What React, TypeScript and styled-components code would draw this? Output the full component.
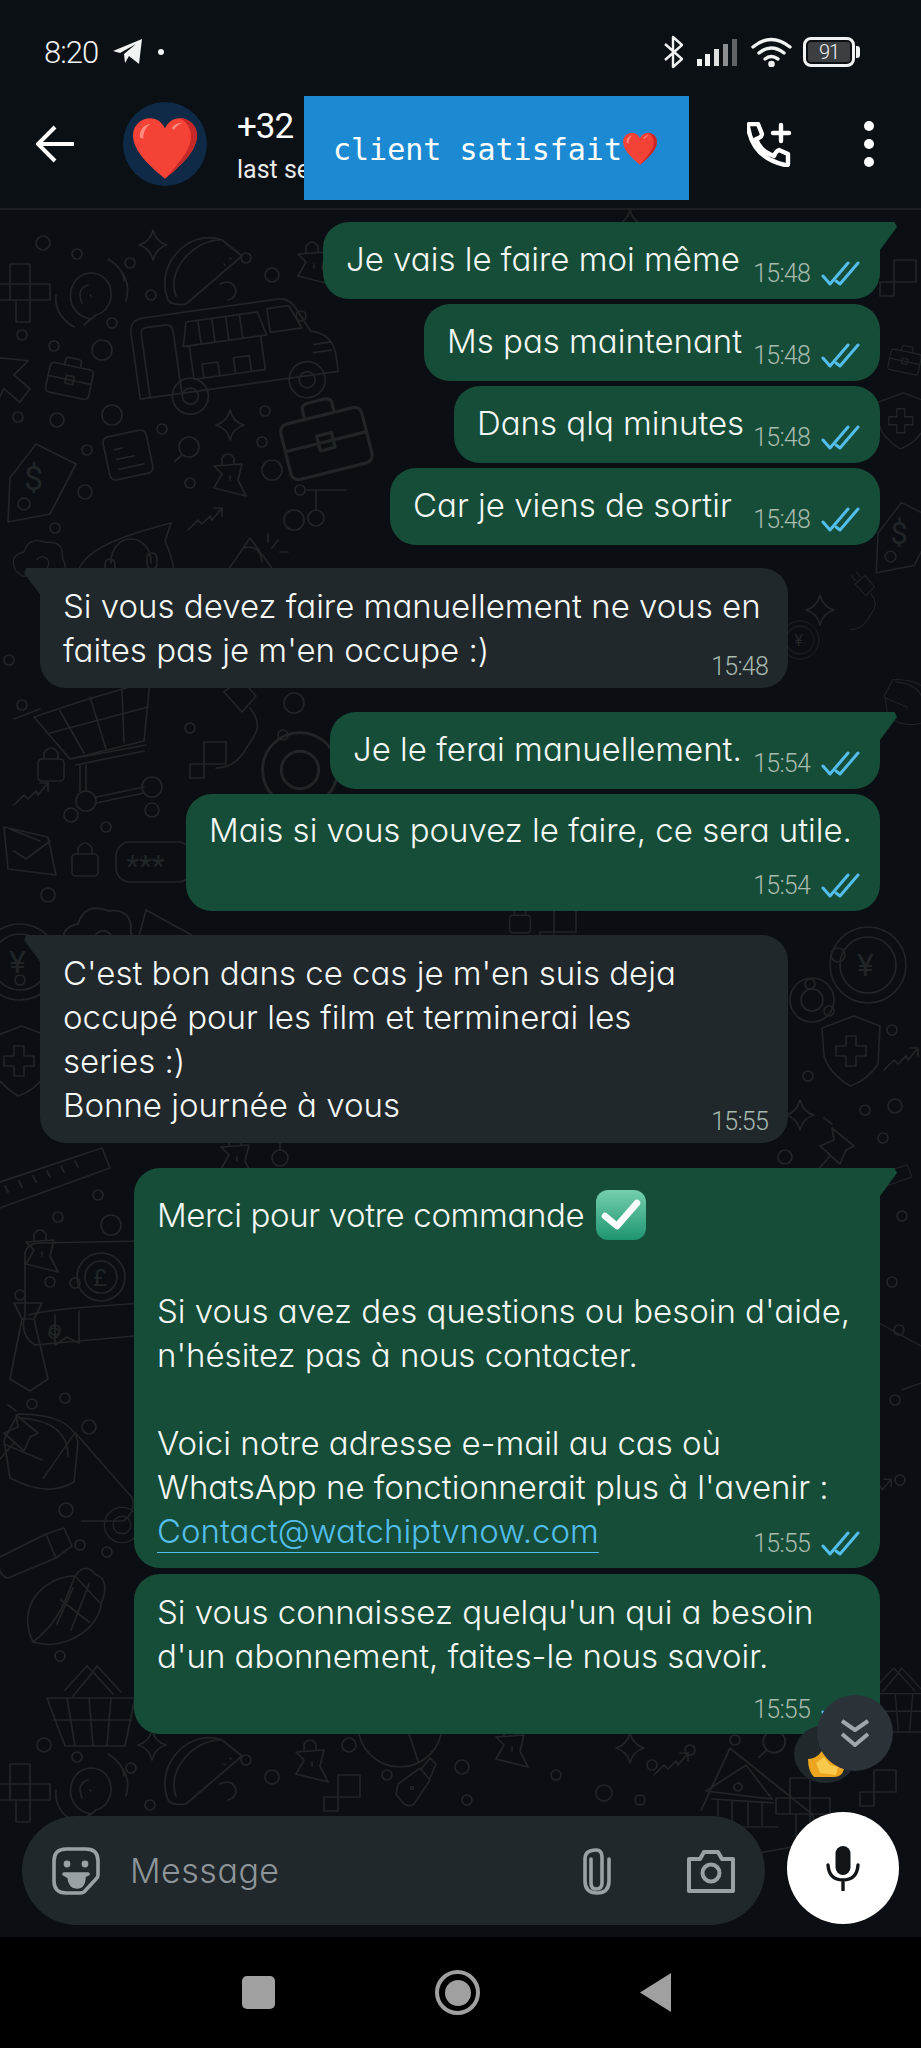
import React from "react";
import styled, { createGlobalStyle } from "styled-components";

const GlobalStyle = createGlobalStyle`
    * { box-sizing: border-box; }
    html, body { margin: 0; padding: 0; background: #0b0f13; }
`

const textFont = `"Inter", "Noto Sans", sans-serif`
const thinFont = `"Roboto", "Liberation Sans", sans-serif`
const doodleInk = "#202528"

// --- wallpaper doodles, every one drawn around 0,0 ---
const doodles: Record<string, React.ReactNode> = {
    truck: <>
        <path d="M0 22 Q0 8 14 8 H150 Q160 8 166 18 L178 44 Q200 50 200 72 V88 H0 Z"/>
        <path d="M10 88 V24 Q10 18 16 18 H34 Q42 18 42 26 V88"/>
        <path d="M56 18 H128 L134 42 H50 Z M68 18 V42 M82 18 V42 M96 18 V42 M110 18 V42"/>
        <path d="M56 42 V76 H128 V42 M66 76 V62 H82 V76 M98 76 V60 H114 V76"/>
        <path d="M138 16 H160 L170 40 H138 Z M180 58 H196 M178 66 H196"/>
        <circle cx="50" cy="92" r="18"/><circle cx="50" cy="92" r="8"/>
        <circle cx="168" cy="92" r="18"/><circle cx="168" cy="92" r="8"/>
    </>,
    taco: <>
        <path d="M-32 30 C-46 -4 -12 -42 22 -30 L42 -14 L-14 34 Q-28 36 -32 30 Z"/>
        <path d="M-24 26 C-34 0 -6 -30 20 -30 M24 -6 l1 1 M30 -12 l1 1 M20 14 q12 -6 16 6 q0 8 -8 10"/>
    </>,
    star: <path d="M0 -15 Q3 -3 14 0 Q3 3 0 15 Q-3 3 -14 0 Q-3 -3 0 -15 Z"/>,
    puzzle: <path d="M-20 -22 H0 V-2 H20 V14 H0 V36 H-14 V14 H-34 V-2 H-20 Z M-20 -2 H0 V14 H-20 Z"/>,
    sound: <>
        <path d="M0 24 C-28 18 -24 -20 0 -22 C26 -22 28 14 6 20 L-6 30 Z"/>
        <path d="M-8 8 Q-14 -6 -2 -10 M0 0 l1 1 M26 -30 Q42 -14 36 6 M18 -36 Q34 -26 34 -14 M-34 0 Q-36 20 -16 32"/>
    </>,
    brief: <>
        <rect x="-22" y="-12" width="44" height="30" rx="4"/>
        <path d="M-8 -12 V-17 Q-8 -20 -4 -20 H4 Q8 -20 8 -17 V-12 M-22 2 H22"/>
        <rect x="-4" y="-2" width="8" height="8"/>
    </>,
    cursor: <path d="M-24 -24 L24 -12 L8 0 L22 16 L10 28 L-4 12 L-14 28 Z"/>,
    tag: <>
        <path d="M-30 -2 L-4 -36 L36 -16 L10 34 L-32 42 Z"/>
        <circle cx="-16" cy="24" r="6"/>
        <text x="-16" y="10" fontSize="34" fill={doodleInk} stroke="none" fontFamily="Roboto">$</text>
    </>,
    note: <>
        <rect x="-22" y="-22" width="44" height="44" rx="6"/>
        <path d="M-12 -8 H-4 M-12 2 H6 M-12 12 H14"/>
    </>,
    loupe: <><circle cx="2" cy="-3" r="10"/><path d="M-5 5 L-12 11"/></>,
    soap: <>
        <path d="M-14 -8 L14 -10 L10 6 L18 22 L-14 14 L-6 0 Z"/>
        <path d="M-6 -9 V-16 Q0 -24 6 -16 V-10 M2 2 V6"/>
    </>,
    phones: <>
        <path d="M-50 40 C-50 10 -20 -5 46 -22 L40 -4 C48 14 54 30 44 60"/>
        <path d="M-14 18 C-14 -14 26 -14 26 18"/>
        <rect x="-20" y="14" width="10" height="16" rx="5"/><rect x="22" y="8" width="10" height="16" rx="5"/>
    </>,
    horn: <path d="M-26 34 L4 -10 L36 34 Z M-2 0 Q14 -4 16 14 M22 -14 V-6 M32 -8 L26 0 M34 4 H42"/>,
    nodes: <>
        <circle cx="-16" cy="-20" r="5"/><circle cx="0" cy="8" r="8"/>
        <path d="M-11 -20 H30 M0 -20 V0"/>
    </>,
    cart: <>
        <path d="M-56 -8 L-8 -24 L60 -44 L54 16 L-20 34 Z"/>
        <path d="M-30 -14 L-6 28 M0 -28 L16 24 M32 -36 L34 18 M-40 8 L58 -18"/>
        <path d="M-76 -6 L-50 -16 M-20 34 L56 20 M-14 40 L54 26 M-10 40 V66 M-4 40 V66"/>
        <circle cx="-4" cy="76" r="10"/><circle cx="62" cy="62" r="10"/>
        <path d="M6 72 L54 62 M6 78 L54 68"/>
    </>,
    basket: <>
        <path d="M-48 -8 L40 -8 L30 40 L-30 40 Z"/>
        <path d="M-28 -8 L-20 40 M-6 -8 L-2 40 M16 -8 L12 40 M-42 14 H36"/>
        <path d="M-30 -16 L-8 -40 L-2 -34 L-22 -10 M26 -14 L2 -40 L-2 -34 L18 -12"/>
    </>,
    plug: <path d="M-8 -10 L8 -24 L24 -6 L10 10 Z M-14 -24 l6 8 M-6 -30 l6 8 M18 6 C34 26 20 36 12 50 C4 62 -6 66 -16 66"/>,
    lock: <><rect x="-13" y="-6" width="26" height="22" rx="4"/><path d="M-7 -6 V-12 Q0 -22 7 -12 V-6"/></>,
    squares: <path d="M-6 -20 H16 V2 H-6 Z M-20 2 H-6 V16 H-20 Z"/>,
    trend: <path d="M-16 10 L-6 0 L-2 4 L6 -4 L8 0 L18 -12 M10 -12 H18 V-4"/>,
    letter: <path d="M-26 -18 L18 -8 L26 30 L-22 24 Z M-16 6 L-4 14 L20 -4 M-20 -16 L10 -4"/>,
    pill: <>
        <rect x="-34" y="-20" width="76" height="40" rx="14"/>
        <text x="-24" y="14" fontSize="30" fill={doodleInk} stroke="none" fontFamily="Roboto">***</text>
    </>,
    cloud: <path d="M-30 14 Q-40 -6 -20 -10 Q-14 -30 8 -22 Q30 -24 28 -2 Q38 16 20 20 H-22 Z M-4 0 a8 8 0 1 1 6 12"/>,
    coin: <>
        <circle r="38"/><circle r="28"/>
        <text x="-11" y="11" fontSize="32" fill={doodleInk} stroke="none" fontFamily="Roboto">¥</text>
    </>,
    shield: <>
        <path d="M-28 -22 L4 -34 L30 -24 L28 14 Q18 30 0 36 Q-22 22 -26 6 Z"/>
        <path d="M-4 -14 H6 V-4 H16 V6 H6 V16 H-4 V6 H-14 V-4 H-4 Z"/>
    </>,
    ruler: <path d="M-76 4 L62 -42 L70 -22 L-68 28 Z M-60 12 l-3 -6 M-46 7 l-3 -6 M-32 2 l-3 -6 M-18 -3 l-3 -6 M-4 -8 l-3 -6 M10 -13 l-3 -6 M24 -18 l-3 -6 M38 -23 l-3 -6"/>,
    wallet: <>
        <path d="M-60 -30 Q-60 -40 -48 -42 L60 -44 V50 L-50 60 Q-66 50 -60 30 Z M-56 30 Q-40 24 60 18"/>
        <circle cx="16" cy="-8" r="24"/><circle cx="16" cy="-8" r="16"/>
        <text x="8" y="1" fontSize="24" fill={doodleInk} stroke="none" fontFamily="Roboto">£</text>
        <path d="M-30 30 V60 L-18 52 L-6 58 V26"/>
    </>,
    tie: <path d="M-14 -42 H14 L6 -26 L20 34 L2 46 L-18 34 L-6 -26 Z M-6 -26 H6"/>,
    corn: <>
        <path d="M-32 30 C-50 -6 -20 -36 10 -36 C0 -10 -6 10 -32 30 Z"/>
        <path d="M-32 30 C0 40 34 16 36 -8 L10 -36"/>
        <path d="M10 -36 Q20 -50 30 -38 Q46 -32 36 -8 M-4 -12 L24 10 M8 -24 L-8 12 M24 -28 L6 18"/>
    </>,
    bottle: <path d="M-34 8 L14 -16 L24 8 L-24 28 Q-34 26 -34 8 Z M14 -16 L32 -22 L40 -4 L24 8"/>,
    dropper: <><path d="M-14 -2 L8 -18 L18 -6 L2 18 Q-4 22 -10 16 L-16 8 Z M10 -18 L18 -28 L24 -22 L18 -8"/><circle cx="0" cy="2" r="1.5"/></>,
    bank: <path d="M-36 -4 L4 -30 L30 4 Z M-30 4 L32 8 M-24 6 V30 M-10 6 V30 M6 8 V30 M20 8 V30 M-38 32 H36 M-4 -12 a4 4 0 1 0 .1 0"/>,
    mug: <path d="M-44 -40 L40 6 Q50 20 40 34 L-4 50 M-44 -40 L-60 20"/>,
    pin: <path d="M-6 -20 L16 -2 L8 2 L2 16 L-18 -2 L-4 -8 Z M-8 8 L-22 24 M-14 -30 l8 6"/>,
    bag: <path d="M-20 -34 Q34 -34 40 -6 L36 34 Q10 50 -28 30 L-34 -8 Z M-34 -4 L4 12 M-16 -30 Q30 -26 30 8"/>,
    ring: <><circle r="22"/><circle r="11"/></>,
    pie: <path d="M-42 -10 A42 42 0 0 0 42 -10 M6 -10 L18 26"/>,
}

type Placed = [string, number, number, number?, number?]

const placed: Placed[] = [
    ["truck", 128, 312, 1, -8], ["taco", 200, 270, 1, 0], ["star", 153, 245], ["star", 230, 425],
    ["puzzle", 30, 286, 1, 0], ["sound", 90, 295], ["brief", 70, 378, 1, 12], ["cursor", 6, 376, 1, -8],
    ["tag", 40, 480, 1, 0], ["note", 128, 455, 1, -12], ["loupe", 187, 450], ["soap", 228, 474],
    ["soap", 312, 262], ["brief", 325, 438, 1.9, -14], ["phones", 125, 545], ["horn", 246, 548], ["nodes", 316, 510],
    ["trend", 204, 520], ["cloud", 40, 560, .8, 0], ["cart", 90, 725], ["plug", 232, 702], ["lock", 51, 765],
    ["squares", 210, 762], ["trend", 30, 795], ["letter", 30, 845], ["lock", 85, 860], ["pill", 150, 862],
    ["cloud", 100, 935, 1.1, 0], ["ring", 300, 770, 1.7], ["mug", 190, 950], ["coin", 20, 962], ["shield", 18, 1060],
    ["ruler", 40, 1190], ["wallet", 85, 1285], ["tie", 28, 1345], ["soap", 40, 1250], ["coin", 868, 965],
    ["shield", 850, 1050], ["star", 800, 1115], ["pin", 838, 1148], ["trend", 900, 1060], ["ruler", 870, 1190, .6],
    ["bag", 38, 1448], ["pin", 22, 1435], ["mug", 100, 1480, .9, 20], ["bottle", 32, 1550], ["corn", 65, 1612],
    ["basket", 95, 1706], ["ring", 122, 1525, .8], ["taco", 200, 1770], ["soap", 310, 1760], ["star", 152, 1745],
    ["puzzle", 30, 1786], ["sound", 90, 1790], ["squares", 344, 1795], ["dropper", 412, 1786], ["pie", 400, 1735],
    ["star", 630, 1748], ["trend", 670, 1765], ["bank", 742, 1795], ["mug", 770, 1800, 1.1, 10], ["loupe", 772, 1745, 1.1],
    ["basket", 900, 1700, .8], ["squares", 880, 1790], ["puzzle", 810, 1800], ["soap", 510, 1745], ["star", 630, 225],
    ["bag", 905, 700, .6], ["shield", 900, 420, .8], ["brief", 905, 360, .7, 12], ["tag", 905, 535, .9], ["plug", 860, 590, .6],
    ["coin", 800, 640, .5], ["star", 820, 610], ["squares", 900, 280], ["ring", 812, 1000, 1], ["squares", 560, 930],
    ["nodes", 280, 1150], ["soap", 235, 1155], ["lock", 520, 920, .8], ["trend", 875, 1490, .9], ["mug", 905, 1350, .8],
]

const dots: [number, number, number][] = [
    [43, 243, 7], [77, 254, 5], [130, 263, 5], [151, 295, 5], [246, 258, 5], [272, 275, 7], [112, 323, 5], [301, 316, 5],
    [22, 335, 5], [54, 346, 5], [102, 350, 10], [57, 420, 7], [18, 417, 5], [112, 415, 10], [162, 429, 5], [265, 411, 5],
    [262, 442, 5], [272, 470, 10], [87, 450, 5], [85, 492, 7], [190, 483, 5], [55, 528, 5], [294, 520, 10], [9, 660, 5],
    [60, 645, 5], [22, 705, 5], [190, 728, 5], [283, 735, 5], [294, 703, 10], [71, 815, 7], [106, 827, 5], [152, 810, 7],
    [48, 895, 7], [20, 980, 5], [98, 1195, 5], [58, 1217, 5], [111, 1225, 10], [50, 1282, 5], [54, 1333, 5], [75, 1283, 5],
    [20, 1295, 5], [55, 1330, 5], [838, 955, 7], [810, 984, 5], [829, 1011, 5], [892, 1030, 5], [808, 1076, 5], [865, 1110, 5],
    [895, 1106, 7], [883, 1138, 5], [785, 1157, 7], [902, 1216, 5], [892, 1282, 5], [899, 1330, 5], [895, 1400, 5], [900, 1480, 5],
    [32, 1404, 5], [65, 1398, 5], [89, 1427, 7], [66, 1510, 7], [80, 1545, 5], [107, 1552, 5], [60, 1656, 5], [44, 1745, 7],
    [77, 1757, 5], [131, 1768, 5], [150, 1805, 5], [246, 1760, 5], [272, 1777, 7], [349, 1745, 7], [387, 1775, 5], [462, 1767, 7],
    [467, 1800, 5], [556, 1775, 5], [604, 1793, 8], [652, 1765, 5], [690, 1750, 5], [735, 1740, 5], [640, 1800, 5], [848, 1675, 5],
]

const Wallpaper = () => (
    <WallpaperSvg viewBox="0 210 921 1727" width="921" height="1727">
        {placed.map(([kind, x, y, scale = 1, rotate = 0], i) => (
            <g key={i} transform={`translate(${x} ${y}) rotate(${rotate}) scale(${scale})`}>{doodles[kind]}</g>
        ))}
        {dots.map(([x, y, r], i) => <circle key={i} cx={x} cy={y} r={r}/>)}
    </WallpaperSvg>
)

// --- small drawings ---
const Heart = ({size}: {size: number}) => (
    <svg width={size} height={size * .92} viewBox="0 0 100 92">
        <path d="M50 91 C22 68 3 48 3 27 C3 12 15 2 28 2 C38 2 46 8 50 17 C54 8 62 2 72 2 C85 2 97 12 97 27 C97 48 78 68 50 91Z" fill="#f44336"/>
        <path d="M72 2 C85 2 97 12 97 27 C97 48 78 68 50 91 C72 66 90 46 88 26 C87 14 80 6 72 2Z" fill="#c62828"/>
        <path d="M13 30 C12 18 20 11 29 10 C22 14 18 22 18 32Z" fill="#ff8a80"/>
        <path d="M60 16 C64 10 70 8 76 9 C70 11 66 14 63 19Z" fill="#ff8a80"/>
    </svg>
)

const Checks = () => (
    <svg width="39" height="25" viewBox="0 0 39 25" fill="none" stroke="#53bdeb" strokeWidth="3" strokeLinecap="round" strokeLinejoin="round">
        <path d="M2 15 L9 23 L27 2"/>
        <path d="M15 20 L19 23 L37 2"/>
    </svg>
)

const Telegram = () => (
    <svg width="30" height="26" viewBox="0 0 30 26">
        <path d="M0 12 L29 0 L26 25 L16 17 L12 24 L11 15 L23 5 L7 14 Z" fill="#f1f3f3"/>
    </svg>
)

const Bluetooth = () => (
    <svg width="21" height="34" viewBox="0 0 21 34" fill="none" stroke="#f1f3f3" strokeWidth="2.4" strokeLinejoin="round">
        <path d="M2 9 L19 24 L10 32 V2 L19 10 L2 25"/>
    </svg>
)

const Signal = () => (
    <svg width="41" height="27" viewBox="0 0 41 27">
        <rect x="0" y="20" width="5" height="7" fill="#f1f3f3"/>
        <rect x="8" y="15" width="5" height="12" fill="#f1f3f3"/>
        <rect x="17" y="10" width="5" height="17" fill="#e0e2e2"/>
        <rect x="26" y="5" width="5" height="22" fill="#8b8f91"/>
        <rect x="35" y="0" width="5" height="27" fill="#5f6366"/>
    </svg>
)

const Wifi = () => (
    <svg width="41" height="30" viewBox="0 0 41 30" fill="none" stroke="#f1f3f3" strokeWidth="3.4" strokeLinecap="round">
        <path d="M2 10 Q20 -5 39 10"/>
        <path d="M8 16 Q20 6 33 16"/>
        <path d="M14 22 Q20 17 27 22"/>
        <circle cx="20.5" cy="27" r="1.6" fill="#f1f3f3"/>
    </svg>
)

const PhonePlus = () => (
    <svg width="45" height="45" viewBox="0 0 45 45" fill="none" stroke="#fff" strokeWidth="4.4" strokeLinecap="round" strokeLinejoin="round">
        <path d="M3 2 H11 L15 12 Q15 15 9 17 Q13 29 27 34 Q29 29 32 28 L41 32 V42 Q41 44 38 43 Q6 36 1 5 Q1 2 3 2 Z"/>
        <path d="M34 3 V19 M26 11 H42"/>
    </svg>
)

const StickerIcon = () => (
    <svg width="48" height="48" viewBox="0 0 48 48" fill="none" stroke="#9aa1a4" strokeWidth="3.6" strokeLinejoin="round">
        <path d="M14 2 H34 Q46 2 46 14 V28 Q46 30 44 32 L32 45 Q30 46 28 46 H14 Q2 46 2 34 V14 Q2 2 14 2 Z"/>
        <circle cx="15" cy="17" r="3.4" fill="#9aa1a4" stroke="none"/>
        <circle cx="33" cy="17" r="3.4" fill="#9aa1a4" stroke="none"/>
        <path d="M12 27 H36 L32 29 Q32 40 25 40 Q18 40 17 30 Z" fill="#9aa1a4"/>
    </svg>
)

const ClipIcon = () => (
    <svg width="30" height="48" viewBox="0 0 30 48" fill="none" stroke="#9aa1a4" strokeWidth="3.6" strokeLinecap="round">
        <path d="M9 12 V36 Q9 42 14 42 Q20 42 20 36 V10 Q20 3 14 3 Q3 3 3 12 V34 Q3 46 15 46 Q27 46 27 34 V12"/>
    </svg>
)

const CameraIcon = () => (
    <svg width="48" height="44" viewBox="0 0 48 44" fill="none" stroke="#9aa1a4" strokeWidth="4" strokeLinejoin="round">
        <path d="M2 10 H13 L17 3 H31 L35 10 H46 V42 H2 Z"/>
        <circle cx="24" cy="24" r="8.5"/>
    </svg>
)

const MicIcon = () => (
    <svg width="34" height="46" viewBox="0 0 34 46" fill="none" stroke="#111518" strokeWidth="3.4" strokeLinecap="round">
        <rect x="9.5" y="1" width="15" height="29" rx="7.5" fill="#111518" stroke="none"/>
        <path d="M2 20 Q3 35 17 35 Q31 35 32 20 M17 35 V45"/>
    </svg>
)

const CheckEmoji = () => (
    <svg width="50" height="50" viewBox="0 0 50 50">
        <defs>
            <linearGradient id="checkFill" x1="0" y1="0" x2="0" y2="1">
                <stop offset="0" stopColor="#74cfae"/>
                <stop offset="1" stopColor="#1f9570"/>
            </linearGradient>
        </defs>
        <rect width="50" height="50" rx="12" fill="url(#checkFill)"/>
        <path d="M9 26 L21 36 L41 13" fill="none" stroke="#fff" strokeWidth="6.5" strokeLinecap="round" strokeLinejoin="round"/>
    </svg>
)

const ThumbEmoji = () => (
    <svg width="36" height="27" viewBox="0 0 36 27">
        <path d="M0 8 Q8 8 14 0 L20 6 Q28 10 30 14 L36 18 Q34 26 26 26 L6 26 Q0 20 0 8 Z" fill="#eca51f"/>
        <path d="M8 12 L16 6 L22 14 L30 16 L28 24 L12 22 Z" fill="#f8c94a"/>
    </svg>
)

const Chevrons = () => (
    <svg width="28" height="29" viewBox="0 0 28 29" fill="none" stroke="#a0a6aa" strokeWidth="4" strokeLinejoin="round">
        <path d="M1 2 L14 11 L27 2"/>
        <path d="M1 15 L14 26 L27 15"/>
    </svg>
)

type MetaProps = {time: string; read?: boolean; $top: number}
const MessageMeta = ({time, read, $top}: MetaProps) => (
    <MetaRow $top={$top}>
        <Time>{time}</Time>
        {read && <Checks/>}
    </MetaRow>
)

const App = () => {
    return (
        <Page>
            <GlobalStyle/>
            <StatusBar>
                <StatusGroup>
                    <Clock>8:20</Clock>
                    <Telegram/>
                    <Dot/>
                </StatusGroup>
                <StatusGroup>
                    <Bluetooth/>
                    <Signal/>
                    <Wifi/>
                    <Battery><BatteryLevel>91</BatteryLevel></Battery>
                </StatusGroup>
            </StatusBar>
            <Header>
                <BackArrow viewBox="0 0 38 38" fill="none" stroke="#fff" strokeWidth="4">
                    <path d="M38 19 H3 M19 2 L2 19 L19 36"/>
                </BackArrow>
                <Avatar><Heart size={68}/></Avatar>
                <Contact>
                    <ContactName>+32</ContactName>
                    <ContactSeen>last se</ContactSeen>
                </Contact>
                <Redaction>client satisfait<Heart size={36}/></Redaction>
                <HeaderActions>
                    <PhonePlus/>
                    <MenuDots><i/><i/><i/></MenuDots>
                </HeaderActions>
            </Header>
            <Chat>
                <Wallpaper/>
                <Messages>
                    <Bubble $sent $tail $width={557} $gap={0}>
                        <OneLine>
                            <Text>Je vais le faire moi même</Text>
                            <MessageMeta time="15:48" read $top={29}/>
                        </OneLine>
                    </Bubble>
                    <Bubble $sent $width={456}>
                        <OneLine>
                            <Text>Ms pas maintenant</Text>
                            <MessageMeta time="15:48" read $top={29}/>
                        </OneLine>
                    </Bubble>
                    <Bubble $sent $width={426}>
                        <OneLine>
                            <Text>Dans qlq minutes</Text>
                            <MessageMeta time="15:48" read $top={29}/>
                        </OneLine>
                    </Bubble>
                    <Bubble $sent $width={490}>
                        <OneLine>
                            <Text>Car je viens de sortir</Text>
                            <MessageMeta time="15:48" read $top={29}/>
                        </OneLine>
                    </Bubble>
                    <Bubble $tail $width={748} $gap={23} $pad="16px 20px 10px 23px">
                        <Text>Si vous devez faire manuellement ne vous en<br/>faites pas je m'en occupe :)</Text>
                        <MessageMeta time="15:48" $top={-18}/>
                    </Bubble>
                    <Bubble $sent $tail $width={550} $gap={24}>
                        <OneLine>
                            <Text>Je le ferai manuellement.</Text>
                            <MessageMeta time="15:54" read $top={29}/>
                        </OneLine>
                    </Bubble>
                    <Bubble $sent $width={694} $pad="14px 20px 14px 23px">
                        <Text>Mais si vous pouvez le faire, ce sera utile.</Text>
                        <MessageMeta time="15:54" read $top={21}/>
                    </Bubble>
                    <Bubble $tail $width={748} $gap={24} $pad="16px 20px 10px 23px">
                        <Text>C'est bon dans ce cas je m'en suis deja<br/>occupé pour les film et terminerai les<br/>series :)<br/>Bonne journée à vous</Text>
                        <MessageMeta time="15:55" $top={-18}/>
                    </Bubble>
                    <Bubble $sent $tail $width={746} $gap={25} $pad="21px 20px 13px 23px">
                        <EmojiLine><Text>Merci pour votre commande</Text><CheckEmoji/></EmojiLine>
                        <Text $top={48}>Si vous avez des questions ou besoin d'aide,<br/>n'hésitez pas à nous contacter.</Text>
                        <Text $top={44}>Voici notre adresse e-mail au cas où<br/>WhatsApp ne fonctionnerait plus à l'avenir :<br/><MailLink>Contact@watchiptvnow.com</MailLink></Text>
                        <MessageMeta time="15:55" read $top={-22}/>
                    </Bubble>
                    <Bubble $sent $width={746} $gap={6} $pad="16px 20px 13px 23px">
                        <Text>Si vous connaissez quelqu'un qui a besoin<br/>d'un abonnement, faites-le nous savoir.</Text>
                        <MessageMeta time="15:55" read $top={19}/>
                    </Bubble>
                </Messages>
                <Reaction><ThumbEmoji/></Reaction>
                <ScrollDown><Chevrons/></ScrollDown>
                <ComposerRow>
                    <Composer>
                        <StickerIcon/>
                        <Placeholder>Message</Placeholder>
                        <ComposerTools>
                            <ClipIcon/>
                            <CameraIcon/>
                        </ComposerTools>
                    </Composer>
                    <MicButton><MicIcon/></MicButton>
                </ComposerRow>
            </Chat>
            <NavBar>
                <NavSquare/>
                <NavHome/>
                <NavBack/>
            </NavBar>
        </Page>
    );
};

export default App;

const Page = styled.div`
    width: 921px;
    height: 2048px;
    display: flex;
    flex-direction: column;
    overflow: hidden;
    background: #0b1014;
    font-family: ${textFont};
`

const StatusBar = styled.div`
    height: 90px;
    padding: 14px 66px 0 44px;
    display: flex;
    justify-content: space-between;
    align-items: center;
`

const StatusGroup = styled.div`
    display: flex;
    align-items: center;
    gap: 13px;
`

const Clock = styled.span`
    font: 300 31px ${thinFont};
    color: #f1f3f3;
    letter-spacing: -1px;
    margin-right: 2px;
`

const Dot = styled.span`
    width: 6px;
    height: 6px;
    border-radius: 50%;
    background: #f1f3f3;
    margin-left: 2px;
`

const Battery = styled.div`
    position: relative;
    width: 52px;
    height: 30px;
    margin-left: -2px;
    border: 3px solid #f1f3f3;
    border-radius: 8px;
    padding: 2px;
    &::after {
        content: "";
        position: absolute;
        right: -8px;
        top: 6px;
        width: 4px;
        height: 12px;
        border-radius: 0 3px 3px 0;
        background: #f1f3f3;
    }
`

const BatteryLevel = styled.div`
    height: 100%;
    border-radius: 3px;
    background: #3b3f42;
    color: #f1f3f3;
    font: 300 20px/20px ${thinFont};
    letter-spacing: -1px;
    text-align: center;
`

const Header = styled.div`
    position: relative;
    height: 120px;
    padding: 0 0 10px 36px;
    display: flex;
    align-items: center;
    border-bottom: 2px solid #1a1f22;
`

const BackArrow = styled.svg`
    width: 38px;
    height: 38px;
    flex: none;
`

const Avatar = styled.div`
    width: 84px;
    height: 84px;
    margin-left: 49px;
    border-radius: 50%;
    background: #0e2a47;
    flex: none;
    display: flex;
    align-items: center;
    justify-content: center;
    padding-top: 8px;
`

const Contact = styled.div`
    margin-left: 30px;
    white-space: nowrap;
    color: #fff;
    font-family: ${thinFont};
`

const ContactName = styled.div`
    font-size: 35px;
    font-weight: 400;
    line-height: 46px;
    letter-spacing: -1px;
`

const ContactSeen = styled.div`
    margin-top: 5px;
    font-size: 25px;
    font-weight: 400;
    line-height: 30px;
    color: #e8eaea;
`

const Redaction = styled.div`
    position: absolute;
    left: 304px;
    top: 6px;
    width: 385px;
    height: 104px;
    background: #1b8ad2;
    color: #fff;
    font: 400 30px "DejaVu Sans Mono", "Liberation Mono", monospace;
    display: flex;
    align-items: center;
    padding: 2px 0 0 29px;
    white-space: nowrap;
`

const HeaderActions = styled.div`
    margin-left: auto;
    padding-right: 47px;
    display: flex;
    align-items: center;
    gap: 72px;
`

const MenuDots = styled.div`
    display: flex;
    flex-direction: column;
    gap: 8px;
    i {
        width: 10px;
        height: 10px;
        border-radius: 50%;
        background: #fff;
    }
`

const Chat = styled.div`
    position: relative;
    flex: 1;
    display: flex;
    flex-direction: column;
    background: #0b0f13;
    overflow: hidden;
`

const WallpaperSvg = styled.svg`
    position: absolute;
    inset: 0;
    fill: none;
    stroke: ${doodleInk};
    stroke-width: 1.7;
    stroke-linejoin: round;
    stroke-linecap: round;
`

const Messages = styled.div`
    position: relative;
    flex: 1;
    padding: 12px 41px 0 40px;
    display: flex;
    flex-direction: column;
`

const Bubble = styled.div<{$sent?: boolean; $tail?: boolean; $width: number; $gap?: number; $pad?: string}>`
    position: relative;
    width: ${p => p.$width}px;
    margin-top: ${p => p.$gap ?? 5}px;
    align-self: ${p => p.$sent ? "flex-end" : "flex-start"};
    padding: ${p => p.$pad ?? "0 20px 0 23px"};
    background: ${p => p.$sent ? "#164d38" : "#20282c"};
    border-radius: 26px;
    ${p => p.$tail && (p.$sent ? "border-top-right-radius: 0;" : "border-top-left-radius: 0;")}
    ${p => p.$tail && `
        &::after {
            content: "";
            position: absolute;
            top: 0;
            ${p.$sent ? "right: -17px;" : "left: -16px;"}
            width: 17px;
            height: 28px;
            background: inherit;
            clip-path: ${p.$sent
                ? "polygon(0 0, 85% 0, 100% 18%, 0 100%)"
                : "polygon(15% 0, 100% 0, 100% 100%, 0 18%)"};
        }
    `}
`

const OneLine = styled.div`
    height: 77px;
    padding-bottom: 4px;
    display: flex;
    align-items: center;
    justify-content: space-between;
`

const Text = styled.div<{$top?: number}>`
    margin-top: ${p => p.$top ?? 0}px;
    font-size: 33px;
    font-weight: 350;
    line-height: 44px;
    color: #f4f7f5;
    white-space: nowrap;
    font-feature-settings: "cv11" 1;
`

const EmojiLine = styled.div`
    height: 52px;
    display: flex;
    align-items: center;
    gap: 12px;
    ${Text} {
        letter-spacing: -.36px;
    }
`

const MailLink = styled.span`
    color: #53bdeb;
    text-decoration: underline;
    text-decoration-thickness: 1px;
    text-underline-offset: 9px;
`

const MetaRow = styled.div<{$top: number}>`
    position: relative;
    margin-top: ${p => p.$top}px;
    height: 24px;
    display: flex;
    justify-content: flex-end;
    align-items: center;
    gap: 11px;
`

const Time = styled.span`
    font: 300 25px ${thinFont};
    letter-spacing: -.8px;
    color: #a7baaf;
`

const Reaction = styled.div`
    position: absolute;
    left: 794px;
    top: 1515px;
    width: 63px;
    height: 58px;
    border-radius: 50%;
    background: #20282c;
    padding: 26px 0 0 14px;
`

const ScrollDown = styled.div`
    position: absolute;
    left: 817px;
    top: 1485px;
    width: 76px;
    height: 76px;
    border-radius: 50%;
    background: #2b3339;
    display: flex;
    align-items: center;
    justify-content: center;
`

const ComposerRow = styled.div`
    position: relative;
    padding: 0 22px 13px;
    display: flex;
    align-items: flex-end;
    justify-content: space-between;
`

const Composer = styled.div`
    width: 743px;
    height: 109px;
    margin-bottom: -1px;
    padding: 0 30px;
    border-radius: 55px;
    background: #20282c;
    display: flex;
    align-items: center;
`

const Placeholder = styled.span`
    margin-left: 30px;
    font-size: 34px;
    font-weight: 350;
    letter-spacing: .5px;
    color: #8f9699;
    font-feature-settings: "cv11" 1;
`

const ComposerTools = styled.div`
    margin-left: auto;
    display: flex;
    align-items: center;
    gap: 75px;
`

const MicButton = styled.div`
    width: 112px;
    height: 112px;
    border-radius: 50%;
    background: #fff;
    display: flex;
    align-items: center;
    justify-content: center;
`

const NavBar = styled.div`
    height: 111px;
    background: #000;
    display: flex;
    align-items: center;
    padding-left: 242px;
`

const NavSquare = styled.div`
    width: 33px;
    height: 33px;
    border-radius: 5px;
    background: #a0a0a0;
`

const NavHome = styled.div`
    width: 45px;
    height: 45px;
    margin-left: 160px;
    border-radius: 50%;
    border: 4px solid #a0a0a0;
    display: flex;
    align-items: center;
    justify-content: center;
    &::after {
        content: "";
        width: 26px;
        height: 26px;
        border-radius: 50%;
        background: #a0a0a0;
    }
`

const NavBack = styled.div`
    width: 31px;
    height: 39px;
    margin-left: 160px;
    background: #a0a0a0;
    clip-path: polygon(100% 0, 100% 100%, 0 50%);
`
